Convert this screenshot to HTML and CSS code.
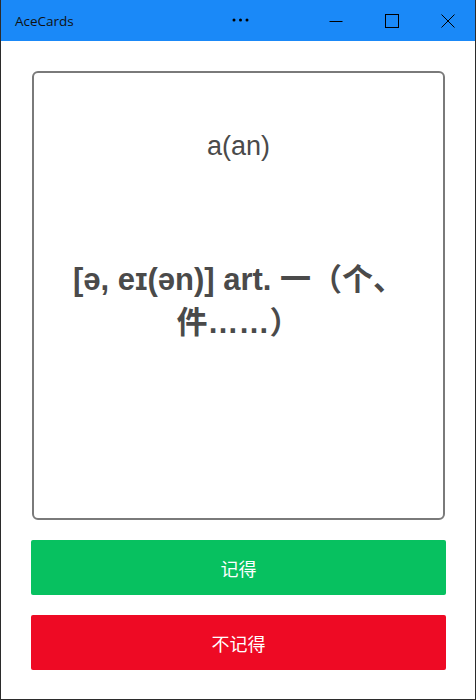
FILE: index.html
```html
<!DOCTYPE html>
<html lang="zh-CN">
<head>
<meta charset="utf-8">
<title>AceCards</title>
<link rel="stylesheet" href="styles.css">
</head>
<body>
<div class="window">
  <header class="titlebar">
    <span class="app-title">AceCards</span>
    <div class="more">
      <svg width="17" height="4" viewBox="0 0 17 4"><circle cx="2" cy="2" r="1.5" fill="#000"/><circle cx="8.5" cy="2" r="1.5" fill="#000"/><circle cx="15" cy="2" r="1.5" fill="#000"/></svg>
    </div>
    <div class="controls">
      <button class="ctl">
        <svg width="14" height="14" viewBox="0 0 14 14"><path d="M0.5 7.5H13.5" stroke="#000" stroke-width="1"/></svg>
      </button>
      <button class="ctl">
        <svg width="14" height="14" viewBox="0 0 14 14"><rect x="0.5" y="0.5" width="13" height="13" fill="none" stroke="#000" stroke-width="1"/></svg>
      </button>
      <button class="ctl">
        <svg width="14" height="14" viewBox="0 0 14 14"><path d="M0.5 0.5L13.5 13.5M13.5 0.5L0.5 13.5" stroke="#000" stroke-width="1"/></svg>
      </button>
    </div>
  </header>
  <main class="content">
    <section class="card">
      <div class="word">a(an)</div>
      <div class="meaning">[ə, eɪ(ən)] art. 一（个、件……）</div>
    </section>
    <button class="action remember">记得</button>
    <button class="action forget">不记得</button>
  </main>
</div>
</body>
</html>
```
FILE: styles.css
```css
html, body {
  margin: 0;
  padding: 0;
  background: #fff;
}
.window {
  width: 476px;
  height: 700px;
  box-sizing: border-box;
  border: 1px solid #2b2b2b;
  border-top: none;
  display: flex;
  flex-direction: column;
  font-family: "Liberation Sans", "Noto Sans CJK SC", sans-serif;
}
.titlebar {
  height: 41px;
  background: #1a89f8;
  display: flex;
  align-items: center;
  position: relative;
  flex-shrink: 0;
}
.app-title {
  font-family: "Open Sans", "Noto Sans", sans-serif;
  font-size: 13.5px;
  color: #111;
  margin-left: 14px;
}
.more {
  position: absolute;
  left: 231px;
  top: 18px;
  display: flex;
}
.controls {
  margin-left: auto;
  display: flex;
  height: 100%;
}
.ctl {
  width: 56px;
  height: 100%;
  border: none;
  background: transparent;
  padding: 0;
  display: flex;
  align-items: center;
  justify-content: center;
}
.ctl:last-child {
  width: 55px;
}
.content {
  flex: 1;
  padding: 30px 29px 0 30px;
  display: flex;
  flex-direction: column;
  gap: 20px;
}
.card {
  height: 449px;
  margin: 0 1px;
  box-sizing: border-box;
  border: 2px solid #7a7a7a;
  border-radius: 6px;
  display: flex;
  flex-direction: column;
  align-items: center;
  padding: 54px 26px 0 26px;
  color: #4a4a4a;
}
.word {
  font-size: 27px;
  line-height: 38px;
}
.meaning {
  flex: 1;
  display: flex;
  align-items: center;
  text-align: center;
  font-size: 31px;
  font-weight: bold;
  line-height: 43px;
  margin-top: -82px;
}
.action {
  height: 55px;
  border: none;
  border-radius: 2px;
  color: #fff;
  font-family: "Noto Sans CJK SC", sans-serif;
  font-size: 18px;
  width: 100%;
}
.remember {
  background: #07c160;
}
.forget {
  background: #ee0a24;
}
```
